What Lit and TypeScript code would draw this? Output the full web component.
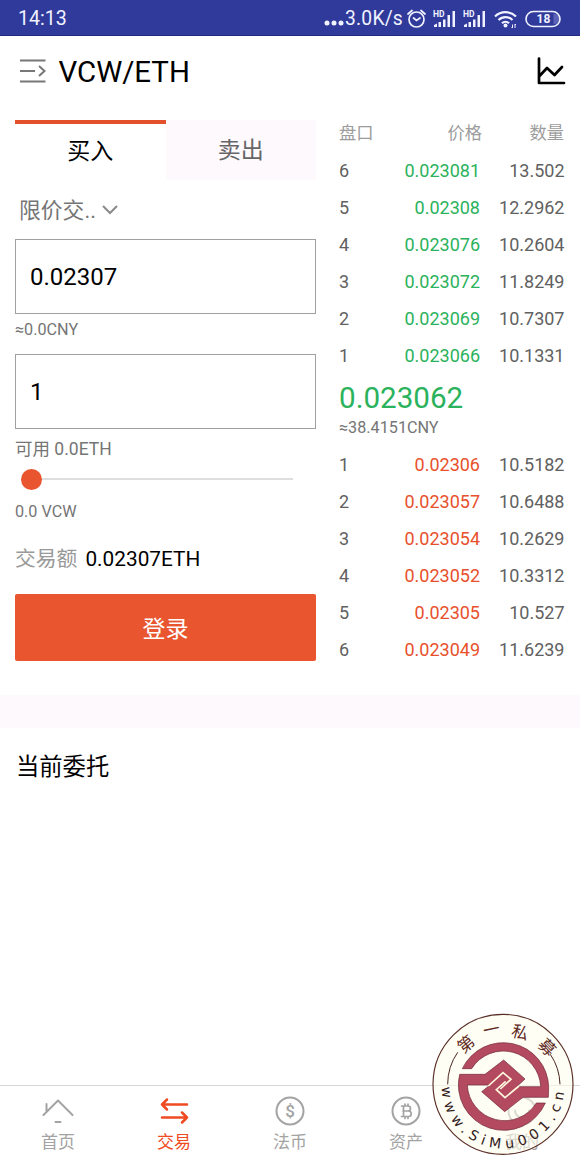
import { LitElement, html, css, svg } from 'lit';
import { customElement, property } from 'lit/decorators.js';
import { classMap } from 'lit/directives/class-map.js';

interface Order {
  level: number;
  price: string;
  amount: string;
}

const SELLS: Order[] = [
  { level: 6, price: '0.023081', amount: '13.502' },
  { level: 5, price: '0.02308', amount: '12.2962' },
  { level: 4, price: '0.023076', amount: '10.2604' },
  { level: 3, price: '0.023072', amount: '11.8249' },
  { level: 2, price: '0.023069', amount: '10.7307' },
  { level: 1, price: '0.023066', amount: '10.1331' }
];

const BUYS: Order[] = [
  { level: 1, price: '0.02306', amount: '10.5182' },
  { level: 2, price: '0.023057', amount: '10.6488' },
  { level: 3, price: '0.023054', amount: '10.2629' },
  { level: 4, price: '0.023052', amount: '10.3312' },
  { level: 5, price: '0.02305', amount: '10.527' },
  { level: 6, price: '0.023049', amount: '11.6239' }
];

@customElement('status-bar')
export class StatusBar extends LitElement {
  static styles = css`
    :host {
      display: flex;
      align-items: center;
      box-sizing: border-box;
      height: 36px;
      padding: 2px 19px 0 18px;
      background: #303a9b;
      border-bottom: 1px solid #23297f;
      color: #f0f2ff;
      font-size: 19.6px;
    }
    .time {
      flex: 1;
    }
    .speed {
      font-size: 19.3px;
      letter-spacing: 0.2px;
    }
    svg {
      display: block;
      fill: none;
      stroke: currentColor;
    }
    .dots {
      margin: 8px 1px 0 0;
    }
    .clock {
      margin: 0 7px 0 4px;
    }
    .signal {
      margin-right: 7px;
    }
    .wifi {
      margin: 0 7px 0 1px;
    }
    .solid {
      fill: currentColor;
      stroke: none;
    }
    .small {
      font: 700 8.5px Roboto, sans-serif;
    }
    .level {
      font: 700 12px Roboto, sans-serif;
    }
    .charge {
      fill: #5b63b8;
      stroke: none;
    }
  `;

  _signal() {
    return html`
      <svg class="signal" width="23" height="20" viewBox="0 0 23 20">
        <text class="solid small" x="0" y="7.500">HD</text>
        <path class="solid" d="M1 18v-2l3-1.500V18zM5.500 18v-5h2.500v5zM10 18v-7.500h2.500V18zM14.500 18V6H17v12zM19.500 18V2H22v16z"/>
      </svg>
    `;
  }

  render() {
    return html`
      <span class="time">14:13</span>
      <svg class="dots" width="20" height="6" viewBox="0 0 20 6">
        <g class="solid"><circle cx="3" cy="3" r="2.500"/><circle cx="10" cy="3" r="2.500"/><circle cx="17" cy="3" r="2.500"/></g>
      </svg>
      <span class="speed">3.0K/s</span>
      <svg class="clock" width="19" height="20" viewBox="0 0 19 20" stroke-width="1.700" stroke-linecap="round">
        <circle cx="9.500" cy="10.500" r="7.500"/>
        <path d="M1 5l4-3.500M18 5l-4-3.500M6.500 9l3 2.500L13 9"/>
      </svg>
      ${this._signal()}
      ${this._signal()}
      <svg class="wifi" width="24" height="20" viewBox="0 0 24 20" stroke-width="2.200">
        <path d="M1 7.500a15 15 0 0 1 21 0M4.500 11a10 10 0 0 1 14 0M8 14.300a5 5 0 0 1 7 0"/>
        <circle class="solid" cx="11.500" cy="16.500" r="2"/>
        <path stroke-width="1" d="M18.500 15.500v3.500l-1-1M21 19v-4l1 1"/>
      </svg>
      <svg width="36" height="18" viewBox="0 0 36 18">
        <path class="charge" d="M28.500 4h1.500a4 4 0 0 1 0 10h-1.500z"/>
        <rect x="1" y="1.500" width="34" height="15" rx="7.500" stroke-width="1.600"/>
        <text class="solid level" x="11.500" y="13.300">18</text>
      </svg>
    `;
  }
}

@customElement('trade-form')
export class TradeForm extends LitElement {
  static styles = css`
    :host {
      display: flex;
      flex-direction: column;
      width: 301px;
    }
    .tabs {
      display: grid;
      grid-template-columns: 1fr 1fr;
      height: 60px;
      font-size: 23px;
      text-align: center;
      color: #666;
    }
    .tab {
      box-sizing: border-box;
      height: 60px;
      padding-top: 2px;
      line-height: 58px;
      background: #fdf9fd;
    }
    .tab.active {
      padding-top: 0;
      border-top: 4px solid #e3502c;
      background: #fff;
      color: #000;
      line-height: 55px;
    }
    .type {
      display: flex;
      align-items: center;
      gap: 5px;
      height: 59px;
      padding-left: 4px;
      font-size: 21.8px;
      color: #757575;
    }
    .type span {
      line-height: 30px;
      padding-top: 2px;
    }
    .type svg {
      fill: none;
      stroke: #8a8a8a;
      stroke-width: 2;
    }
    .field {
      box-sizing: border-box;
      height: 75px;
      padding: 0 14px;
      border: 1px solid #a0a0a0;
      font-size: 24px;
      line-height: 74px;
      color: #000;
    }
    .note {
      height: 20px;
      margin: 5px 0 15px;
      font-size: 16.2px;
      line-height: 22px;
      color: #757575;
    }
    .note.available {
      margin: 10px 0 9px;
      font-size: 17.5px;
      line-height: 21px;
    }
    .slider {
      display: flex;
      align-items: center;
      height: 22px;
      margin: 0 23px 0 6px;
    }
    .knob {
      width: 21px;
      height: 21px;
      border-radius: 50%;
      background: #e8552f;
    }
    .track {
      flex: 1;
      height: 2px;
      background: #dedede;
    }
    .note.coin {
      margin: 11px 0 26px;
    }
    .total {
      display: flex;
      gap: 8px;
      height: 24px;
      font-size: 20.8px;
      line-height: 24px;
      color: #000;
    }
    .total .label {
      color: #999;
    }
    .submit {
      height: 67px;
      margin-top: 23px;
      padding: 0 0 2px;
      border: 0;
      border-radius: 2px;
      background: #e8552f;
      color: #fff;
      font: inherit;
      font-size: 23px;
    }
  `;

  render() {
    return html`
      <div class="tabs">
        <div class="tab active">买入</div>
        <div class="tab">卖出</div>
      </div>
      <div class="type">
        <span>限价交..</span>
        <svg width="18" height="12" viewBox="0 0 18 12"><path d="M2 2l7 7 7-7"/></svg>
      </div>
      <div class="field">0.02307</div>
      <div class="note">≈0.0CNY</div>
      <div class="field">1</div>
      <div class="note available">可用 0.0ETH</div>
      <div class="slider"><div class="knob"></div><div class="track"></div></div>
      <div class="note coin">0.0 VCW</div>
      <div class="total"><span class="label">交易额</span><span>0.02307ETH</span></div>
      <button class="submit">登录</button>
    `;
  }
}

@customElement('order-book')
export class OrderBook extends LitElement {
  static styles = css`
    :host {
      display: block;
      width: 226px;
      color: #616161;
      font-size: 18px;
    }
    .head, .row {
      display: grid;
      grid-template-columns: 40px 101px 84.5px;
      text-align: right;
    }
    .head {
      grid-template-columns: 40px 103px 82px;
      height: 32px;
      font-size: 17.3px;
      line-height: 26px;
      color: #9c9c9c;
    }
    .row {
      height: 37px;
      line-height: 38px;
    }
    .level {
      text-align: left;
    }
    .up {
      color: #2bb25c;
    }
    .down {
      color: #e8502c;
    }
    .last {
      height: 72px;
    }
    .price {
      height: 44px;
      font-size: 29.6px;
      line-height: 48px;
    }
    .cny {
      font-size: 16.2px;
      line-height: 20px;
      color: #757575;
    }
  `;

  _renderRows(orders: Order[], up: boolean) {
    return orders.map(order => html`
      <div class="row">
        <span class="level">${order.level}</span>
        <span class=${classMap({ up, down: !up })}>${order.price}</span>
        <span>${order.amount}</span>
      </div>
    `);
  }

  render() {
    return html`
      <div class="head"><span class="level">盘口</span><span>价格</span><span>数量</span></div>
      ${this._renderRows(SELLS, true)}
      <div class="last">
        <div class="price up">0.023062</div>
        <div class="cny">≈38.4151CNY</div>
      </div>
      ${this._renderRows(BUYS, false)}
    `;
  }
}

@customElement('nav-item')
export class NavItem extends LitElement {
  @property() label = '';
  @property() icon = '';
  @property({ type: Boolean }) active = false;

  static styles = css`
    .item {
      display: flex;
      flex-direction: column;
      align-items: center;
      padding-top: 8px;
      color: #a3a3a3;
      font-size: 17px;
      line-height: 28px;
    }
    .item.active {
      color: #f04a22;
    }
    svg {
      display: block;
      fill: none;
      stroke: currentColor;
      stroke-width: 2;
      stroke-linecap: round;
      stroke-linejoin: round;
    }
    .sign {
      fill: currentColor;
      stroke: none;
      font: 500 17px Roboto, sans-serif;
      text-anchor: middle;
    }
  `;

  _renderIcon() {
    switch (this.icon) {
      case 'home':
        return svg`<path d="M5.500 17V10M2.500 21L17 6.500 31.500 21M14.500 28h5" />`;
      case 'trade':
        return svg`<path stroke-width="2.500" d="M30 10.500H5M10 5.500l-5 5 5 5M5 23.500h25M25 18.500l5 5-5 5"/>`;
      case 'fiat':
        return svg`<circle cx="17" cy="17" r="13.500"/><text class="sign" x="17" y="23">$</text>`;
      case 'asset':
        return svg`<circle cx="17" cy="17" r="13.500"/><path stroke-width="1.700" d="M12.500 12h6.500a2.500 2.500 0 0 1 0 5h-5h5.500a2.500 2.500 0 0 1 0 5.500h-7M14.500 12v10.500M16 10v2M19 10v2M16 22.500v2M19 22.500v2"/>`;
      default:
        return svg`<circle cx="17" cy="17" r="13.500"/><path d="M10 16.500a7 7 0 0 0 14 0"/>`;
    }
  }

  render() {
    return html`
      <div class=${classMap({ item: true, active: this.active })}>
        <svg width="34" height="34" viewBox="0 0 34 34">${this._renderIcon()}</svg>
        <span>${this.label}</span>
      </div>
    `;
  }
}

@customElement('site-seal')
export class SiteSeal extends LitElement {
  static styles = css`
    :host {
      display: block;
    }
    svg {
      display: block;
    }
    .disc {
      fill: #fffdec;
      fill-opacity: 0.6;
      stroke: #5a3028;
      stroke-width: 3.5;
    }
    .line {
      fill: none;
      stroke: #4a2620;
      stroke-width: 3;
    }
    .mark {
      fill: #b34a60;
      stroke: #6e2537;
      stroke-width: 2;
    }
    .groove {
      fill: none;
      stroke: #fff8dc;
      stroke-width: 5;
    }
    text {
      fill: #5f2a24;
    }
    .name {
      font: 50px "Noto Sans CJK SC", sans-serif;
      text-anchor: middle;
    }
    .site {
      font: 42px "DejaVu Sans", sans-serif;
      fill: #33211d;
    }
  `;

  render() {
    return html`
      <svg width="155" height="155" viewBox="0 0 465 465">
        <circle class="disc" cx="234" cy="238" r="210"/>
        <path class="line" d="M68 238A168 168 0 0 1 98 142M376 148A168 168 0 0 1 405 238"/>
        <!-- two interlocking hooks closing on a diamond -->
        <path class="mark" d="M112 191A136 136 0 0 1 371 247L370 277H294L239 320 170 260 195 240H127A112 112 0 0 0 334 294H361A136 136 0 0 1 104 208H180L236 165 300 222 275 245H347A112 112 0 0 0 140 191Z"/>
        <path class="groove" d="M190 243L234 203 258 223 226 252M282 243L240 278 214 254 242 229"/>
        <text class="name" transform="translate(123 117) rotate(-40)" y="18">第</text>
        <text class="name" transform="translate(199 73) rotate(-12)" y="18">一</text>
        <text class="name" transform="translate(285 82) rotate(15)" y="18">私</text>
        <text class="name" transform="translate(366 127) rotate(46)" y="18">募</text>
        <path id="rim" fill="none" d="M50 246A184 184 0 0 0 418 246"/>
        <text class="site"><textPath href="#rim" textLength="562">www.SiMu001.cn</textPath></text>
      </svg>
    `;
  }
}

@customElement('app-root')
export class AppRoot extends LitElement {
  static styles = css`
    :host {
      display: flex;
      flex-direction: column;
      position: relative;
      box-sizing: border-box;
      height: 1160px;
      overflow: hidden;
      background: #fff;
      color: #000;
      font-family: Roboto, "Noto Sans CJK SC", sans-serif;
    }
    .header {
      display: flex;
      align-items: center;
      height: 72px;
      padding: 0 14px 0 19px;
    }
    .header svg {
      display: block;
      fill: none;
    }
    .pair {
      flex: 1;
      margin-left: 11.5px;
      font-size: 29.4px;
    }
    .trade {
      display: flex;
      justify-content: space-between;
      height: 575px;
      padding: 12px 15px 0;
    }
    .band {
      height: 33px;
      background: #fdf9fd;
    }
    .orders {
      flex: 1;
      padding: 22px 16px 0;
      font-size: 23.3px;
      line-height: 34px;
    }
    .nav {
      display: grid;
      grid-template-columns: repeat(5, 1fr);
      height: 74px;
      border-top: 1px solid #d8d8d8;
    }
    .seal {
      position: absolute;
      right: 0;
      bottom: 0;
    }
  `;

  render() {
    return html`
      <status-bar></status-bar>
      <div class="header">
        <svg width="28" height="28" viewBox="0 0 28 28" stroke="#777" stroke-width="2">
          <path d="M1 2.500h25.500M1 13h15M1 23.500h25.500M20 8l5.500 5-5.500 5"/>
        </svg>
        <span class="pair">VCW/ETH</span>
        <svg width="30" height="30" viewBox="0 0 30 30" stroke="#000" stroke-width="2.700" stroke-linecap="round" stroke-linejoin="round">
          <path d="M3 1.500V26h25M3.500 19L11 11l7.500 7L26 10"/>
        </svg>
      </div>
      <div class="trade">
        <trade-form></trade-form>
        <order-book></order-book>
      </div>
      <div class="band"></div>
      <div class="orders">当前委托</div>
      <div class="nav">
        <nav-item icon="home" label="首页"></nav-item>
        <nav-item icon="trade" label="交易" active></nav-item>
        <nav-item icon="fiat" label="法币"></nav-item>
        <nav-item icon="asset" label="资产"></nav-item>
        <nav-item icon="mine" label="我的"></nav-item>
      </div>
      <site-seal class="seal"></site-seal>
    `;
  }
}
